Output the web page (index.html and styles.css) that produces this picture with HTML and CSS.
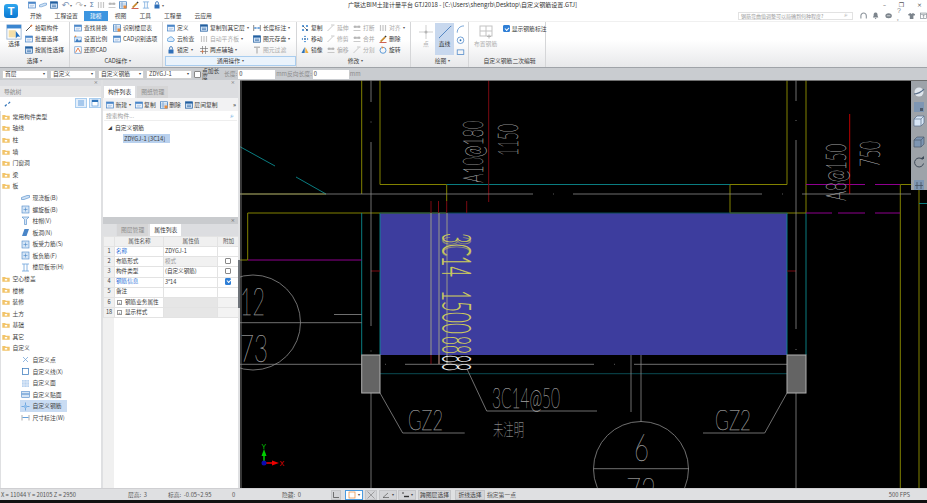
FILE: index.html
```html
<!DOCTYPE html>
<html lang="zh">
<head>
<meta charset="utf-8">
<title>广联达BIM土建计量平台 GTJ2018</title>
<link rel="stylesheet" href="styles.css">
</head>
<body>
<svg class="defs" xmlns="http://www.w3.org/2000/svg">
  <symbol id="i-pick" viewBox="0 0 8 8"><path d="M1 7 6 2" stroke="#555" stroke-width="1"/><path d="M5.500 2.500 7 1" stroke="#d8703a" stroke-width="1.400"/></symbol>
  <symbol id="i-panel" viewBox="0 0 8 8"><rect x=".5" y="1" width="7" height="6" fill="#e8f0fa" stroke="#4a86c8" stroke-width=".7"/><rect x=".5" y="1" width="7" height="1.800" fill="#4a86c8"/><path d="M2 4.500h4M2 5.800h3" stroke="#9ab8dc" stroke-width=".5"/></symbol>
  <symbol id="i-table" viewBox="0 0 8 8"><rect x=".5" y=".8" width="7" height="6.400" fill="#fff" stroke="#2f73b8" stroke-width=".7"/><path d="M.5 3h7M3 1v6M.5 5h7" stroke="#2f73b8" stroke-width=".5"/><rect x="4.500" y="4.500" width="3" height="3" fill="#e98b3c"/></symbol>
  <symbol id="i-scale" viewBox="0 0 8 8"><rect x=".5" y="2" width="7" height="5" fill="#dbe9f8" stroke="#4a86c8" stroke-width=".5"/><path d="M1 7 3 3.500 5 6 6.500 4.500 7.500 7z" fill="#3d7cc0"/><circle cx="1.500" cy="1.300" r=".9" fill="#e98b3c"/></symbol>
  <symbol id="i-restore" viewBox="0 0 8 8"><rect x=".8" y=".8" width="6.400" height="6.400" fill="#fff" stroke="#4a86c8" stroke-width=".6"/><path d="M1.500 6.500 4 2l2.500 4.500" fill="none" stroke="#e2703a" stroke-width=".9"/></symbol>
  <symbol id="i-cloud" viewBox="0 0 8 8"><path d="M2 6.500a1.700 1.700 0 0 1-.2-3.400A2.300 2.300 0 0 1 6 3.200 1.700 1.700 0 0 1 6 6.500z" fill="#dcebfa" stroke="#4a93d8" stroke-width=".7"/></symbol>
  <symbol id="i-lock" viewBox="0 0 8 8"><rect x="1.500" y="3.500" width="5" height="4" fill="#2f6fb8"/><path d="M2.600 3.500V2a1.400 1.400 0 0 1 2.800 0v1.500" fill="none" stroke="#2f6fb8" stroke-width=".8"/></symbol>
  <symbol id="i-axis" viewBox="0 0 8 8"><path d="M2.500 0v8M5.500 0v8M0 2.500h8M0 5.500h8" stroke="#666" stroke-width=".6"/><circle cx="2.500" cy="5.500" r="1" fill="#e2703a"/></symbol>
  <symbol id="i-dim" viewBox="0 0 8 8"><path d="M.7 1v6M7.300 1v6" stroke="#555" stroke-width=".7"/><path d="M1 4h6" stroke="#3b82cc" stroke-width=".8"/><path d="M2.600 3 1.200 4l1.400 1zM5.400 3 6.800 4 5.400 5z" fill="#3b82cc"/></symbol>
  <symbol id="i-save" viewBox="0 0 8 8"><rect x=".5" y=".8" width="7" height="6.400" fill="#cfe1f5" stroke="#225f9f" stroke-width=".7"/><rect x=".5" y=".8" width="7" height="1.800" fill="#225f9f"/><path d="M2 4.200h4M2 5.600h4" stroke="#225f9f" stroke-width=".6"/></symbol>
  <symbol id="i-gray-t" viewBox="0 0 8 8"><path d="M1 1.200h6M4 1.200V7.500" stroke="#b9b9b9" stroke-width="1.400"/></symbol>
  <symbol id="i-gray-bars" viewBox="0 0 8 8"><path d="M1.500 1v6M4 1v6M6.500 1v6" stroke="#c5c5c5" stroke-width="1.200"/></symbol>
  <symbol id="i-gray-line" viewBox="0 0 8 8"><path d="M.5 7 6 1.500M4 1h3.500" stroke="#bcbcbc" stroke-width=".8"/></symbol>
  <symbol id="i-gray-blocks" viewBox="0 0 8 8"><path d="M1 3.500h2.500V2H1zM4.500 3.500H7V2H4.500zM.5 6.500h7" fill="#b5b5b5" stroke="#b5b5b5" stroke-width=".7"/></symbol>
  <symbol id="i-copy" viewBox="0 0 8 8"><g fill="#3b86d0"><circle cx="2" cy="2" r="1.100"/><circle cx="6" cy="2" r="1.100"/><circle cx="2" cy="6" r="1.100"/></g><circle cx="6" cy="6" r="1.100" fill="#26609f"/><path d="M2 2l4 4" stroke="#333" stroke-width=".5"/></symbol>
  <symbol id="i-move" viewBox="0 0 8 8"><path d="M4 .5 5.200 2H2.800zM4 7.500 2.800 6h2.400zM.5 4 2 2.800v2.400zM7.500 4 6 5.200V2.800z" fill="#3b86d0"/><circle cx="4" cy="4" r=".9" fill="#26609f"/></symbol>
  <symbol id="i-mirror" viewBox="0 0 8 8"><path d="M3.700 1v6H.5z" fill="#2f73b8"/><path d="M4.300 1v6h3.200z" fill="#f0b040"/></symbol>
  <symbol id="i-delete" viewBox="0 0 8 8"><path d="M1 6 5.500 1.500l1.200 1.200L2.200 7.200z" fill="#c98a2c"/><path d="M.5 7.500h7" stroke="#c0392b" stroke-width=".8"/><path d="M5.500 1.500l1-1 1.100 1.100-1 1z" fill="#333"/></symbol>
  <symbol id="i-rotate" viewBox="0 0 8 8"><circle cx="4" cy="4.300" r="3" fill="none" stroke="#3b86d0" stroke-width=".8"/><path d="M2.500 .3 5 1.300 3 2.800z" fill="#e98b3c"/></symbol>
  <symbol id="folder" viewBox="0 0 8 8"><path d="M.3 2h2.800l.8.8h3.800v4H.3z" fill="#f2c469"/><rect x="2.800" y="4" width="2.400" height="1.600" fill="#fff"/></symbol>
  <symbol id="n-slab" viewBox="0 0 9 9"><path d="M.5 4.500 6 2.500h2.500v2L3 6.500H.5z" fill="#cfe2f5" stroke="#4a86c8" stroke-width=".6"/></symbol>
  <symbol id="n-square" viewBox="0 0 9 9"><rect x="1" y="1" width="7" height="7" fill="#d5e5f6" stroke="#4a86c8" stroke-width=".6"/><path d="M2.500 4.500h4M4.500 2.500v4" stroke="#4a86c8" stroke-width=".6"/></symbol>
  <symbol id="n-cap" viewBox="0 0 9 9"><path d="M1 1h7L5.500 3.500v5h-2v-5z" fill="#d5e5f6" stroke="#4a86c8" stroke-width=".6"/></symbol>
  <symbol id="n-hole" viewBox="0 0 9 9"><path d="M1 8 3.500 1H8L5.500 8z" fill="#4a86c8"/></symbol>
  <symbol id="n-bars" viewBox="0 0 9 9"><path d="M1 1h7M1 8h7M3 1v7M6 1v7" stroke="#6ea3da" stroke-width=".8"/></symbol>
  <symbol id="n-x" viewBox="0 0 9 9"><path d="M2 2l5 5M7 2 2 7" stroke="#7aa7d8" stroke-width=".8"/></symbol>
  <symbol id="n-rect" viewBox="0 0 9 9"><rect x="1.500" y="1.500" width="6" height="6" fill="none" stroke="#2f73b8" stroke-width=".7"/><path d="M1.500 1.500h.1M7.500 1.500h.1M1.500 7.500h.1M7.500 7.500h.1" stroke="#2f73b8" stroke-width="1.600"/></symbol>
  <symbol id="n-dots" viewBox="0 0 9 9"><rect x="1" y="1" width="7" height="7" fill="#b8d2ee"/><path d="M1 3h7M1 6h7M3 1v7M6 1v7" stroke="#e8f1fb" stroke-width=".7"/></symbol>
  <symbol id="n-band" viewBox="0 0 9 9"><rect x=".7" y="1.500" width="7.600" height="6" fill="#d5e5f6" stroke="#4a86c8" stroke-width=".6"/><path d="M.7 4h7.600" stroke="#4a86c8" stroke-width="1"/></symbol>
  <symbol id="n-rebar" viewBox="0 0 9 9"><path d="M4.500 .5v8M.5 4.500h8" stroke="#4a90d8" stroke-width=".7"/><circle cx="4.500" cy="4.500" r="1.700" fill="#8fbdea"/></symbol>
  <symbol id="n-dim" viewBox="0 0 9 9"><path d="M1 2v5.500M8 2v5.500" stroke="#777" stroke-width=".6"/><path d="M1.500 4.500h6" stroke="#3b86d0" stroke-width=".8"/></symbol>
</svg>

<div class="app">
  <header class="head">
    <div class="logo-wrap"><div class="logo">T</div></div>
    <div class="head-main">
      <div class="title-row">
        <div class="qat">
          <svg class="qi"><use href="#i-panel"/></svg>
          <svg class="qi"><use href="#n-slab"/></svg>
          <svg class="qi"><use href="#i-save"/></svg>
          <span class="qg">↶</span><span class="qa">▾</span>
          <span class="qg lt">↷</span><span class="qa">▾</span>
          <span class="qg sig">Σ</span>
          <svg class="qi"><use href="#i-gray-bars"/></svg>
          <svg class="qi"><use href="#i-gray-blocks"/></svg>
          <svg class="qi"><use href="#i-table"/></svg>
          <svg class="qi"><use href="#i-delete"/></svg>
          <svg class="qi"><use href="#n-bars"/></svg>
          <svg class="qi"><use href="#i-lock"/></svg>
          <span class="qa">▾</span>
        </div>
        <div class="title">广联达BIM土建计量平台 GTJ2018 - [C:\Users\shengrb\Desktop\自定义钢筋设置.GTJ]</div>
        <div class="winctl"><span>–</span><span>❐</span><span>×</span></div>
      </div>
      <div class="tab-row">
        <nav class="tabs">
          <span class="tab t1">开始</span><span class="tab t2">工程设置</span><span class="tab active">建模</span><span class="tab t3">视图</span><span class="tab t4">工具</span><span class="tab t5">工程量</span><span class="tab t6">云应用</span>
        </nav>
        <div class="search-top"><span>钢筋弯曲值调整可以局确到何种程度?</span><span class="mag">⌕</span></div>
        <div class="help-icons">
          <svg class="hi" viewBox="0 0 8 8"><path d="M1 7V4a3 3 0 0 1 6 0v3" fill="none" stroke="#8a929a" stroke-width="1.200"/></svg>
          <svg class="hi" viewBox="0 0 8 8"><path d="M4 .5c-2 0-2.200 2-2.200 3.500L1 6h6l-.8-2C6.200 2.500 6 .5 4 .5zM3 6.500h2L4 7.800z" fill="#7c848c"/></svg>
          <svg class="hi" viewBox="0 0 8 8"><ellipse cx="4" cy="4" rx="3.600" ry="2.800" fill="#7c848c"/><path d="M2 4h4" stroke="#fff" stroke-width=".7"/></svg>
          <span class="help-q">?<i>▾</i></span>
          <svg class="hi" viewBox="0 0 8 8"><path d="M2.500 1 0 2.500 1 4l1-.4V7.500h4V3.600L7 4l1-1.500L5.500 1 4 2z" fill="#7c848c"/></svg>
          <svg class="hi" viewBox="0 0 8 8"><rect x=".7" y="1" width="6.600" height="6" fill="none" stroke="#7c848c" stroke-width=".7"/><path d="M.7 2.500h6.600M4 6.500V3.500M2.800 4.500 4 3.300l1.200 1.200" fill="none" stroke="#7c848c" stroke-width=".7"/></svg>
        </div>
      </div>
    </div>
  </header>

  <section class="ribbon">
    <div class="grp g1">
      <div class="gbody">
        <div class="big">
          <svg class="big-ic" viewBox="0 0 18 18"><rect x="1" y="1" width="16" height="16" fill="#fff" stroke="#9bb6d6"/><rect x="1" y="1" width="16" height="4" fill="#3b86d0"/><rect x="3" y="7" width="8" height="8" fill="#f4dfa8"/><path d="M11 8v8l2.200-2 2.800.3z" fill="#1f6fc0"/></svg>
          <span>选择</span>
        </div>
        <div class="col">
          <div class="it"><svg class="ic"><use href="#i-pick"/></svg>拾取构件</div>
          <div class="it"><svg class="ic"><use href="#i-panel"/></svg>批量选择</div>
          <div class="it"><svg class="ic"><use href="#i-save"/></svg>按属性选择</div>
        </div>
      </div>
      <div class="glabel">选择 <b>▾</b></div>
    </div>

    <div class="grp g2">
      <div class="gbody">
        <div class="col w39">
          <div class="it"><svg class="ic"><use href="#i-panel"/></svg>查找替换</div>
          <div class="it"><svg class="ic"><use href="#i-scale"/></svg>设置比例</div>
          <div class="it"><svg class="ic"><use href="#i-restore"/></svg>还原CAD</div>
        </div>
        <div class="col">
          <div class="it"><svg class="ic"><use href="#i-table"/></svg>识别楼层表</div>
          <div class="it"><svg class="ic"><use href="#i-panel"/></svg>CAD识别选项</div>
        </div>
      </div>
      <div class="glabel">CAD操作 <b>▾</b></div>
    </div>

    <div class="grp g3">
      <div class="gbody">
        <div class="col w33">
          <div class="it"><svg class="ic"><use href="#i-panel"/></svg>定义</div>
          <div class="it"><svg class="ic"><use href="#i-cloud"/></svg>云检查</div>
          <div class="it"><svg class="ic"><use href="#i-lock"/></svg>锁定 <b>▾</b></div>
        </div>
        <div class="col w53">
          <div class="it"><svg class="ic"><use href="#i-save"/></svg>复制到其它层 <b>▾</b></div>
          <div class="it off"><svg class="ic"><use href="#i-gray-bars"/></svg>自动平齐板 <b>▾</b></div>
          <div class="it"><svg class="ic"><use href="#i-axis"/></svg>两点辅轴 <b>▾</b></div>
        </div>
        <div class="col">
          <div class="it"><svg class="ic"><use href="#i-dim"/></svg>长度标注 <b>▾</b></div>
          <div class="it"><svg class="ic"><use href="#i-save"/></svg>图元存盘 <b>▾</b></div>
          <div class="it off"><svg class="ic"><use href="#i-gray-t"/></svg>图元过滤</div>
        </div>
      </div>
      <div class="glabel hl">通用操作 <b>▾</b></div>
    </div>

    <div class="grp g4">
      <div class="gbody">
        <div class="col w26">
          <div class="it"><svg class="ic"><use href="#i-copy"/></svg>复制</div>
          <div class="it"><svg class="ic"><use href="#i-move"/></svg>移动</div>
          <div class="it"><svg class="ic"><use href="#i-mirror"/></svg>镜像</div>
        </div>
        <div class="col w26">
          <div class="it off"><svg class="ic"><use href="#i-gray-line"/></svg>延伸</div>
          <div class="it off"><svg class="ic"><use href="#i-gray-line"/></svg>修剪</div>
          <div class="it off"><svg class="ic"><use href="#i-gray-blocks"/></svg>偏移</div>
        </div>
        <div class="col w26">
          <div class="it off"><svg class="ic"><use href="#i-gray-blocks"/></svg>打断</div>
          <div class="it off"><svg class="ic"><use href="#i-gray-blocks"/></svg>合并</div>
          <div class="it off"><svg class="ic"><use href="#i-gray-line"/></svg>分割</div>
        </div>
        <div class="col">
          <div class="it off"><svg class="ic"><use href="#i-gray-bars"/></svg>对齐 <b>▾</b></div>
          <div class="it"><svg class="ic"><use href="#i-delete"/></svg>删除</div>
          <div class="it"><svg class="ic"><use href="#i-rotate"/></svg>旋转</div>
        </div>
      </div>
      <div class="glabel">修改 <b>▾</b></div>
    </div>

    <div class="grp g5">
      <div class="gbody">
        <div class="tool off">
          <svg class="tool-ic" viewBox="0 0 14 14"><path d="M7 0v14M0 7h14" stroke="#c9c9c9" stroke-width=".9"/><circle cx="7" cy="7" r="1.500" fill="#b5b5b5"/></svg>
          <span>点</span>
        </div>
        <div class="tool sel">
          <svg class="tool-ic" viewBox="0 0 14 14"><path d="M1 13 13 1" stroke="#4a7fbe" stroke-width=".9"/><path d="M1 13h.1M13 1h.1" stroke="#2f73b8" stroke-width="1.800"/></svg>
          <span>直线</span>
        </div>
        <div class="minis">
          <svg viewBox="0 0 9 9"><path d="M1 8C1 4 4 1 8 1" fill="none" stroke="#4a86c8" stroke-width=".8"/><path d="M1 8h.1M8 1h.1" stroke="#2f73b8" stroke-width="1.600"/></svg>
          <svg viewBox="0 0 9 9"><circle cx="4.500" cy="4.500" r="3.500" fill="none" stroke="#4a86c8" stroke-width=".8"/><circle cx="4.500" cy="4.500" r="1" fill="#2f73b8"/></svg>
          <svg viewBox="0 0 9 9"><rect x="1" y="2" width="7" height="5" fill="none" stroke="#4a86c8" stroke-width=".8"/></svg>
        </div>
      </div>
      <div class="glabel">绘图 <b>▾</b></div>
    </div>

    <div class="grp g6">
      <div class="gbody">
        <div class="tool off layout">
          <svg class="tool-ic" viewBox="0 0 14 14"><rect x="1" y="1" width="12" height="10" fill="none" stroke="#c3c3c3"/><path d="M7 1v10M1 6h12" stroke="#c3c3c3"/><path d="M10 9.500v4M8 11.500h4" stroke="#b5b5b5"/></svg>
          <span>布置钢筋</span>
        </div>
        <label class="chk"><span class="cb on"></span>显示钢筋标注</label>
      </div>
      <div class="glabel">自定义钢筋二次编辑</div>
    </div>
    <div class="rest"></div>
  </section>

  <section class="optbar">
    <div class="combo c1">首层<b>▾</b></div>
    <div class="combo">自定义<b>▾</b></div>
    <div class="combo">自定义钢筋<b>▾</b></div>
    <div class="combo">ZDYGJ-1<b>▾</b></div>
    <span class="cb plain"></span>
    <span class="opt-l">点加长度</span><span class="opt-m">长度:</span>
    <div class="num n1">0</div><span class="opt-m">mm反向长度:</span>
    <div class="num n2">0</div><span class="opt-m">mm</span>
  </section>

  <main class="work">
    <aside class="nav">
      <div class="strip"><span>×</span></div>
      <div class="nav-head">导航树</div>
      <div class="nav-tools">
        <svg class="ntop" viewBox="0 0 8 8"><path d="M1 6l2-2M5 3l2-2" stroke="#2f73b8" stroke-width="1.400"/></svg>
        <span class="ntb"><svg viewBox="0 0 8 8"><path d="M1 2h6M1 4h6M1 6h6" stroke="#4a90d8" stroke-width=".8"/></svg></span>
        <span class="ntb"><svg viewBox="0 0 8 8"><rect x="1" y="1" width="6" height="6" fill="#fff" stroke="#4a90d8" stroke-width=".6"/><rect x="1" y="1" width="6" height="2" fill="#2f73b8"/></svg></span>
      </div>
      <ul class="tree">
        <li class="top"><svg><use href="#folder"/></svg>常用构件类型</li>
        <li class="top"><svg><use href="#folder"/></svg>轴线</li>
        <li class="top"><svg><use href="#folder"/></svg>柱</li>
        <li class="top"><svg><use href="#folder"/></svg>墙</li>
        <li class="top"><svg><use href="#folder"/></svg>门窗洞</li>
        <li class="top"><svg><use href="#folder"/></svg>梁</li>
        <li class="top"><svg><use href="#folder"/></svg>板</li>
        <li class="sub"><svg><use href="#n-slab"/></svg>现浇板(B)</li>
        <li class="sub"><svg><use href="#n-square"/></svg>螺旋板(B)</li>
        <li class="sub"><svg><use href="#n-cap"/></svg>柱帽(V)</li>
        <li class="sub"><svg><use href="#n-hole"/></svg>板洞(N)</li>
        <li class="sub"><svg><use href="#n-square"/></svg>板受力筋(S)</li>
        <li class="sub"><svg><use href="#n-square"/></svg>板负筋(F)</li>
        <li class="sub"><svg><use href="#n-bars"/></svg>楼层板带(H)</li>
        <li class="top"><svg><use href="#folder"/></svg>空心楼盖</li>
        <li class="top"><svg><use href="#folder"/></svg>楼梯</li>
        <li class="top"><svg><use href="#folder"/></svg>装修</li>
        <li class="top"><svg><use href="#folder"/></svg>土方</li>
        <li class="top"><svg><use href="#folder"/></svg>基础</li>
        <li class="top"><svg><use href="#folder"/></svg>其它</li>
        <li class="top"><svg><use href="#folder"/></svg>自定义</li>
        <li class="sub"><svg><use href="#n-x"/></svg>自定义点</li>
        <li class="sub"><svg><use href="#n-rect"/></svg>自定义线(X)</li>
        <li class="sub"><svg><use href="#n-dots"/></svg>自定义面</li>
        <li class="sub"><svg><use href="#n-band"/></svg>自定义贴面</li>
        <li class="sub picked"><svg><use href="#n-rebar"/></svg><span>自定义钢筋</span></li>
        <li class="sub"><svg><use href="#n-dim"/></svg>尺寸标注(W)</li>
      </ul>
    </aside>

    <div class="mid">
      <div class="strip"><span>×</span></div>
      <div class="ptabs">
        <span class="ptab on">构件列表</span><span class="ptab">图纸管理</span>
      </div>
      <div class="list-pane">
        <div class="list-tools">
          <span class="lt-i"><svg class="ic"><use href="#i-panel"/></svg>新建 <b>▾</b></span>
          <span class="lt-i"><svg class="ic"><use href="#i-panel"/></svg>复制</span>
          <span class="lt-i"><svg class="ic"><use href="#i-table"/></svg>删除</span>
          <span class="lt-i"><svg class="ic"><use href="#i-save"/></svg>层间复制</span>
          <span class="more">»</span>
        </div>
        <div class="list-search"><span>搜索构件...</span><i>⌕</i></div>
        <div class="ltree">
          <div class="lroot"><b>◢</b>自定义钢筋</div>
          <div class="lleaf"><span>ZDYGJ-1 [3C14]</span></div>
        </div>
      </div>
      <div class="split"><span>×</span></div>
      <div class="ptabs t2">
        <span class="ptab">图层管理</span><span class="ptab on">属性列表</span>
      </div>
      <div class="prop-pane">
        <table class="props">
          <colgroup><col class="cn"><col class="ca"><col class="cv"><col class="cx"></colgroup>
          <thead><tr><th></th><th>属性名称</th><th>属性值</th><th>附加</th></tr></thead>
          <tbody>
            <tr><td class="n">1</td><td class="link">名称</td><td>ZDYGJ-1</td><td></td></tr>
            <tr><td class="n">2</td><td>布筋形式</td><td class="mute">模式</td><td class="x"><span class="cb"></span></td></tr>
            <tr><td class="n">3</td><td>构件类型</td><td>(自定义钢筋)</td><td class="x"><span class="cb"></span></td></tr>
            <tr><td class="n">4</td><td class="link">钢筋信息</td><td>3<sup>⌀</sup>14</td><td class="x"><span class="cb on"></span></td></tr>
            <tr><td class="n">5</td><td>备注</td><td></td><td></td></tr>
            <tr><td class="n">6</td><td><span class="plus">+</span>钢筋业务属性</td><td class="fill"></td><td class="fill2"></td></tr>
            <tr><td class="n">18</td><td><span class="plus">+</span>显示样式</td><td class="fill"></td><td class="fill2"></td></tr>
          </tbody>
        </table>
        <div class="prop-rest"><div class="prop-num"></div></div>
      </div>
    </div>

    <div class="scrollgap"><div class="thumb"></div></div>

    <div class="canvas">
      <svg class="cad" viewBox="240 80 687 408" xmlns="http://www.w3.org/2000/svg">
        <rect x="240" y="80" width="687" height="408" fill="#000"/>
        <rect class="slab" x="380" y="213" width="407" height="142"/>

        <g class="y">
          <path d="M361.700 80V194M240 194H326M380 80V184.500H446.700V201"/>
          <path d="M247.700 260V213H446.700M240 260H247.700"/>
          <path d="M787 80V184.500H730V213H806V80"/>
          <path d="M900.300 184.500V488M919 190V488M900.300 184.500H912"/>
        </g>
        <g class="c">
          <path d="M240 146.700 275 166M296 177 326 194M446.700 184.500H730M919 203.500H927"/>
          <path d="M361.700 213V355M380 213V355M787 213V355M806 213V355"/>
        </g>
        <path class="dc" d="M380 373.700H787M380 213H787"/>
        <g class="m">
          <path d="M248 260H361.700"/>
          <path d="M806 184.500H865M875 184.500H900M806 213H832M838 213H865M875 213H900"/>
        </g>
        <g class="r">
          <path d="M488.700 80V202M431 201V213M438.500 201V213M446.700 201V213M466.700 201V213M371 271H380"/>
          <path d="M431 355V364M439 355V364M787 271H796"/>
        </g>
        <path class="r2" d="M849.700 114V194"/>
        <g class="g">
          <path d="M241 80V488M240 80.500H927"/>
          <path d="M371 80V102M371 121.500V122.500M371 142V326M371 350.500V351.500M371 393V488"/>
          <path d="M796 80V101M796 120V121M796 140V329M796 349V350M796 393V488"/>
          <path d="M240 194H533M553 194H553.800M573 194H762M782 194H782.800M802 194H911"/>
          <path d="M240 364.300H361.700M385 364.300H385.800M405 364.300H594M614 364.300H614.800M634 364.300H787"/>
          <path d="M240 322.700H361.700M334 314.500H361.700"/>
          <path d="M631 355V412M641 355V421.700"/>
          <path d="M380 393 402.700 433H464.700M787 393 764.700 433H703"/>
          <path d="M467 369 486.700 411H597"/>
          <path d="M593.700 468.700H689"/>
          <circle cx="253" cy="322.500" r="47.500"/>
          <circle cx="641" cy="469" r="47.500"/>
        </g>
        <path class="bars" d="M431 213V355M439 213V364M447 213V364"/>

        <rect class="col-box" x="361.700" y="355" width="18.300" height="38"/>
        <rect class="col-box" x="787" y="355" width="19" height="38"/>

        <text class="t" font-size="28" transform="translate(482.700 182.700) rotate(-90)" textLength="62" lengthAdjust="spacingAndGlyphs">A10@180</text>
        <text class="t" font-size="28" transform="translate(518 156) rotate(-90)" textLength="32" lengthAdjust="spacingAndGlyphs">1150</text>
        <text class="t" font-size="28" transform="translate(846 200.700) rotate(-90)" textLength="57" lengthAdjust="spacingAndGlyphs">A8@150</text>
        <text class="t" font-size="28" transform="translate(880 167) rotate(-90)" textLength="26" lengthAdjust="spacingAndGlyphs">750</text>

        <text class="yt" font-size="42" transform="translate(442 233) rotate(90)" textLength="44" lengthAdjust="spacingAndGlyphs">3C14</text>
        <text class="yt ghost" font-size="42" transform="translate(442 236) rotate(90)" textLength="40" lengthAdjust="spacingAndGlyphs">3C14</text>
        <text class="yt" font-size="42" transform="translate(442 290) rotate(90)" textLength="44" lengthAdjust="spacingAndGlyphs">1500</text>
        <text class="yt" font-size="42" transform="translate(442 336) rotate(90)" textLength="18" lengthAdjust="spacingAndGlyphs">88</text>
        <text class="wt" font-size="42" transform="translate(442 355) rotate(90)" textLength="16" lengthAdjust="spacingAndGlyphs">88</text>

        <text class="t" font-size="27" x="408" y="430" textLength="35" lengthAdjust="spacingAndGlyphs">GZ2</text>
        <text class="t" font-size="27" x="715" y="430" textLength="36" lengthAdjust="spacingAndGlyphs">GZ2</text>
        <text class="t" font-size="27" x="492" y="408" textLength="68" lengthAdjust="spacingAndGlyphs">3C14@50</text>
        <text class="tc" font-size="17" x="493" y="436" textLength="31" lengthAdjust="spacingAndGlyphs">未注明</text>
        <text class="t" font-size="38" x="240" y="315" textLength="25" lengthAdjust="spacingAndGlyphs">12</text>
        <text class="t" font-size="38" x="240" y="362" textLength="28" lengthAdjust="spacingAndGlyphs">73</text>
        <text class="t" font-size="38" x="634" y="461" textLength="15" lengthAdjust="spacingAndGlyphs">6</text>
        <text class="t" font-size="38" x="626" y="505" textLength="30" lengthAdjust="spacingAndGlyphs">72</text>

        <path class="ax-y" d="M264 463V452"/><path class="ax-yh" d="M264 449 261.500 456H266.500z"/>
        <path class="ax-x" d="M264 463H275"/><path class="ax-xh" d="M279 463 272 460.500V465.500z"/>
        <circle class="ax-o" cx="264" cy="463" r="2.500"/>
        <text class="ax-yt" x="261.500" y="449" font-size="7">Y</text>
        <text class="ax-xt" x="279.500" y="466" font-size="7">X</text>
      </svg>
      <div class="sidebar">
        <svg viewBox="0 0 12 12"><circle cx="6" cy="6" r="4.500" fill="#dfe5ec"/><path d="M1 8c3 0 8-2 10-5" stroke="#5a6f8a" stroke-width="1.200" fill="none"/></svg>
        <svg viewBox="0 0 12 12"><rect x="1" y="1" width="10" height="10" fill="#7e96b3"/><rect x="7" y="7" width="3" height="3" fill="#4c5a6c"/></svg>
        <svg viewBox="0 0 12 12"><path d="M1 4 4 1h7v7l-3 3H1z" fill="#d8e6f6" stroke="#5a6f8a" stroke-width=".7"/><path d="M1 4h7v7M8 4l3-3" fill="none" stroke="#5a6f8a" stroke-width=".7"/></svg>
        <svg class="gap" viewBox="0 0 12 12"><path d="M1 4 4 1h7v7l-3 3H1z" fill="#7e96b3" stroke="#4c5a6c" stroke-width=".7"/><path d="M1 4h7v7M8 4l3-3" fill="none" stroke="#4c5a6c" stroke-width=".7"/></svg>
        <svg class="gap" viewBox="0 0 12 12"><path d="M9.500 3.500a4.500 4.500 0 1 0 1 4" fill="none" stroke="#3f4a58" stroke-width="1"/><path d="M7 3h4V0z" fill="#3f4a58"/></svg>
        <svg class="gap2" viewBox="0 0 12 12"><rect x="1" y="1" width="10" height="10" fill="#7e96b3"/><path d="M4 3v7M8 3v7M2 6.500h8" stroke="#3f4a58" stroke-width=".7"/></svg>
      </div>
    </div>
  </main>

  <footer class="status">
    <span class="s-xyz">X = 11044 Y = 20105 Z = 2950</span>
    <span class="s-h">层高:&nbsp; 3</span>
    <span class="s-b">标高:&nbsp; -0.05~2.95</span>
    <span class="s-z">0</span>
    <span class="s-hide">隐藏:&nbsp; 0</span>
    <span class="sb b1"><svg viewBox="0 0 8 8"><path d="M1.500 1v5.500H7" fill="none" stroke="#444" stroke-width=".7"/></svg></span>
    <span class="sb b2"><svg viewBox="0 0 8 8"><rect x="1" y="1" width="6" height="6" fill="#fff" stroke="#e98b3c" stroke-width=".7"/></svg><b>▾</b></span>
    <span class="sb b3"><svg viewBox="0 0 8 8"><path d="M.5 .5l7 7M7.500 .5l-7 7" stroke="#666" stroke-width=".5"/></svg></span>
    <span class="sb b4"><svg viewBox="0 0 8 8"><path d="M1 6.500h6M1 6.500 6 2" stroke="#444" stroke-width=".6"/></svg><b>▾</b></span>
    <span class="sb b4"><svg viewBox="0 0 8 8"><path d="M1 2h2M2 1v2" stroke="#444" stroke-width=".6"/><path d="M3 5.500h5" stroke="#333" stroke-width="1.400"/></svg><b>▾</b></span>
    <span class="sb b5">跨图层选择</span>
    <span class="sb b6">折线选择</span>
    <span class="s-hint">指定第一点</span>
    <span class="s-fps">500 FPS</span>
  </footer>
  <div class="blackline"></div>
</div>
</body>
</html>
```

FILE: styles.css
```css
* { box-sizing: border-box; }
html, body { margin: 0; padding: 0; width: 927px; height: 503px; overflow: hidden; background: #dfe0e2; }
body { font-family: "Noto Sans CJK SC", "Liberation Sans", sans-serif; font-size: 5.8px; color: #3c3c3c; line-height: 1; }
.defs { display: none; }
.app { width: 927px; height: 503px; display: flex; flex-direction: column; }

/* header */
.head { height: 21px; display: flex; background: #fff; flex: none; }
.logo-wrap { width: 28px; display: flex; padding: 4px 0 0 4px; }
.logo { width: 14px; height: 14px; border-radius: 3px; background: linear-gradient(#2fa6ee, #0a78d2); color: #fff; font: bold 11px/14px "Liberation Sans", sans-serif; text-align: center; }
.head-main { flex: 1; display: flex; flex-direction: column; min-width: 0; }
.title-row { height: 10.5px; display: flex; align-items: center; }
.qat { width: 148px; display: flex; align-items: center; gap: 3.2px; height: 10.5px; padding-left: 0; flex: none; }
.qi { width: 8px; height: 8px; flex: none; }
.qg { font: 9px/8px "DejaVu Sans", sans-serif; color: #7c93b4; }
.qg.lt { color: #bbb; }
.qg.sig { color: #5a7ba6; font-size: 7px; }
.qa { font-size: 4px; color: #666; margin-left: -2px; }
.title { margin-left: 172px; width: 240px; white-space: nowrap; font-size: 6.05px; color: #333; flex: none; }
.winctl { margin-left: auto; display: flex; width: 44px; justify-content: space-between; padding-right: 5px; color: #555; font: 6px/10px "DejaVu Sans", sans-serif; }
.tab-row { height: 10.5px; display: flex; align-items: stretch; }
.tabs { display: flex; width: 710px; flex: none; }
.tab { display: flex; align-items: center; height: 10.5px; font-size: 5.8px; color: #444; }
.t1 { margin-left: 2px; }
.t2 { margin-left: 13px; }
.tab.active { margin-left: 6px; width: 24px; justify-content: center; background: #3c95e0; color: #fff; }
.t3 { margin-left: 7px; }
.t4 { margin-left: 13px; }
.t5 { margin-left: 13px; }
.t6 { margin-left: 13px; }
.search-top { width: 118px; height: 8.5px; margin-top: 1px; border: 1px solid #e2e2e2; display: flex; align-items: center; justify-content: space-between; padding: 0 4px 0 2px; color: #9a9a9a; font-size: 5px; }
.mag { font: 7px/7px "DejaVu Sans", sans-serif; color: #999; }
.help-icons { display: flex; align-items: center; gap: 5px; padding-left: 7px; }
.hi { width: 7.500px; height: 7.500px; }
.help-q { font: 7px/8px "Liberation Sans", sans-serif; color: #7c848c; }
.help-q i { font-size: 3px; font-style: normal; }

/* ribbon */
.ribbon { height: 46px; flex: none; display: flex; background: linear-gradient(#fff 0, #fff 40%, #e7e8ea 100%); border-top: 1px solid #f0f0f0; }
.grp { display: flex; flex-direction: column; border-right: 1px solid #d5d6d8; height: 100%; flex: none; }
.g1 { width: 70px; }
.g2 { width: 93px; padding-left: 4px; }
.g3 { width: 134px; padding-left: 4px; }
.g4 { width: 114px; padding-left: 4px; }
.g5 { width: 58px; padding-left: 6px; }
.g6 { width: 77px; padding-left: 5px; }
.rest { flex: 1; }
.gbody { flex: 1; display: flex; min-height: 0; }
.glabel { height: 10px; margin-bottom: 1px; display: flex; align-items: center; justify-content: center; gap: 2px; font-size: 5.8px; flex: none; }
.glabel b, .it b { font-size: 3.500px; font-weight: normal; color: #555; }
.glabel.hl { background: #eaf3fc; border: 1px solid #a9cdef; margin-left: -2px; margin-right: 0; }
.big { width: 25px; display: flex; flex-direction: column; align-items: center; padding: 2px 0 0 3px; gap: 1px; flex: none; }
.big-ic { width: 16px; height: 16px; }
.col { display: flex; flex-direction: column; }
.w39 { width: 39px; }
.w33 { width: 33px; }
.w53 { width: 53px; }
.w26 { width: 26px; }
.it { height: 11.300px; display: flex; align-items: center; gap: 2px; white-space: nowrap; }
.it.off { color: #a8a8a8; }
.ic { width: 8px; height: 8px; flex: none; }
.tool { width: 19px; height: 32px; display: flex; flex-direction: column; align-items: center; padding-top: 2px; gap: 2px; margin-top: 1px; }
.tool.off { color: #b0b0b0; width: 18px; }
.tool.sel { background: #c8d8ee; color: #333; }
.tool-ic { width: 14px; height: 14px; flex: none; }
.minis { display: flex; flex-direction: column; gap: 2.800px; padding: 3px 0 0 2px; }
.minis svg { width: 9px; height: 9px; }
.tool.layout { width: 24px; white-space: nowrap; }
.chk { display: flex; align-items: center; gap: 2px; height: 11px; margin: 1px 0 0 6px; white-space: nowrap; }
.cb { display: inline-block; width: 6.500px; height: 6.500px; border: 1px solid #888; background: #fff; border-radius: 1px; position: relative; flex: none; }
.cb.on { background: #2f7fd6; border-color: #2f7fd6; }
.cb.on::after { content: ""; position: absolute; left: 1px; top: .4px; width: 3px; height: 2px; border-left: 1px solid #fff; border-bottom: 1px solid #fff; transform: rotate(-45deg); }

/* option bar */
.optbar { height: 13px; flex: none; display: flex; align-items: center; background: #c9ccd0; padding-left: 2px; border-top: 1px solid #9fa3a8; }
.combo { width: 45.500px; height: 9px; margin-right: 2.500px; background: #fff; border: 1px solid #d0d0d0; display: flex; align-items: center; justify-content: space-between; padding: 0 2px; }
.combo b { font-size: 3.500px; font-weight: normal; }
.optbar .plain { margin-left: 0; width: 7px; height: 7px; }
.opt-l { margin-left: 1px; width: 22px; }
.opt-m { color: #8b8b8b; white-space: nowrap; }
.num { height: 9px; background: #fff; padding: 1.500px 0 0 1px; margin: 0 1px; }
.n1 { width: 37px; }
.n2 { width: 36px; }

/* work */
.work { flex: 1; min-height: 0; display: flex; background: #dfe0e2; }
.strip { height: 6px; display: flex; justify-content: flex-end; padding-right: 3px; color: #777; font: 5px/5px "DejaVu Sans", sans-serif; background: #dcdde0; flex: none; }
.nav { width: 101px; flex: none; display: flex; flex-direction: column; background: #fff; }
.nav-head { height: 11px; background: #e6e6e7; color: #888; display: flex; align-items: center; padding-left: 4px; flex: none; }
.nav-tools { height: 14px; display: flex; gap: 2px; padding: 1px 0 0 4px; flex: none; }
.ntop { width: 7px; height: 7px; margin: 3px auto 0 0; }
.ntb { width: 12px; height: 10px; background: #e4effb; border: 1px solid #a9cdef; display: flex; align-items: center; justify-content: center; }
.ntb svg { width: 8px; height: 8px; }
.tree { list-style: none; margin: 0; padding: 0; border-left: 1px solid #dfe0e2; flex: 1; }
.tree li { height: 11.580px; display: flex; align-items: center; white-space: nowrap; color: #444; }
.tree .top { padding-left: 1px; gap: 2.500px; }
.tree .top svg { width: 8px; height: 8px; }
.tree .sub { padding-left: 20px; gap: 2.500px; }
.tree .sub svg { width: 9px; height: 9px; }
.tree .picked { background: linear-gradient(90deg, transparent 19px, #c9dcf3 19px, #c9dcf3 66px, transparent 66px); }

.mid { width: 135px; margin-left: 2px; flex: none; display: flex; flex-direction: column; }
.ptabs { height: 12px; display: flex; padding-left: 1px; gap: 2px; background: #dcdde0; flex: none; align-items: flex-end; }
.ptab { height: 12px; padding: 0 4px; display: flex; align-items: center; background: #d5d5d6; color: #8c8c8c; }
.ptab.on { background: #fff; color: #333; }
.list-pane { height: 119px; background: #fff; flex: none; display: flex; flex-direction: column; }
.list-tools { height: 13px; display: flex; align-items: center; gap: 4px; padding-left: 3px; background: #f2f2f3; }
.lt-i { display: flex; align-items: center; gap: 1.500px; white-space: nowrap; }
.lt-i b { font-size: 3.500px; font-weight: normal; }
.more { margin-left: auto; padding-right: 2px; font-weight: bold; }
.list-search { height: 9px; margin: 1px 1px 0; display: flex; justify-content: space-between; align-items: center; padding: 0 3px 0 2px; color: #999; border-bottom: 1px solid #eee; }
.list-search i { font: normal 7px/7px "DejaVu Sans", sans-serif; color: #3d94d8; }
.ltree { padding: 1.500px 0 0 5px; }
.lroot { height: 11px; display: flex; align-items: center; gap: 3px; }
.lroot b { font-size: 4px; font-weight: normal; }
.lleaf { height: 10px; padding-left: 15px; display: flex; align-items: center; }
.lleaf span { background: #b9d1ee; width: 47px; height: 9px; display: flex; align-items: center; padding-left: 1px; white-space: nowrap; }
.split { height: 7px; background: #c9cbce; display: flex; justify-content: flex-end; padding-right: 3px; color: #666; font: 5px/7px "DejaVu Sans", sans-serif; flex: none; }
.prop-pane { flex: 1; min-height: 0; display: flex; flex-direction: column; background: #fff; }
.props { border-collapse: collapse; table-layout: fixed; width: 135px; flex: none; }
.cn { width: 11px; }
.ca { width: 49px; }
.cv { width: 54px; }
.cx { width: 21px; }
.props th, .props td { height: 10.150px; padding: 0 0 0 1px; border: 1px solid #e3e3e3; font-weight: normal; white-space: nowrap; overflow: hidden; font-size: 5.6px; }
.props th { background: #f0f0f0; text-align: center; color: #555; }
.props td.n { background: #f0f0f0; text-align: center; padding: 0; }
.props .link { color: #2a70d8; }
.props .mute { background: #f1f1f1; color: #999; }
.props .fill { background: #e6e6e6; }
.props .fill2 { background: #f3f3f3; }
.props .x { text-align: center; padding: 0; }
.props sup { font-size: 3.500px; }
.plus { display: inline-block; width: 5px; height: 5px; border: 1px solid #999; margin: 0 3px 0 1px; font: 4px/3.500px "Liberation Sans", sans-serif; text-align: center; vertical-align: -0.5px; }
.prop-rest { flex: 1; display: flex; }
.prop-num { width: 11px; background: #f0f0f0; }

.scrollgap { width: 2px; flex: none; padding-top: 180px; }
.thumb { height: 48px; background: #6e7379; }

.canvas { flex: 1; min-width: 0; position: relative; background: #000; }
.cad { display: block; width: 100%; height: 100%; }
.slab { fill: #3d3d9e; }
.y path, .c path, .dc, .m path, .r path, .r2, .g path, .g circle, .bars { fill: none; }
.y path { stroke: #828200; stroke-width: 1; }
.c path { stroke: #0b8a8f; stroke-width: .9; }
.dc { stroke: #0a4a52; stroke-width: 1; }
.m path { stroke: #8f008f; stroke-width: 1; }
.r path { stroke: #7a0a12; stroke-width: 1; }
.r2 { stroke: #b00; stroke-width: 1; }
.g path, .g circle { stroke: #8c8c8c; stroke-width: .8; }
.bars { stroke: #9a9a88; stroke-width: 1; }
.col-box { fill: #646464; stroke: #b0b0b0; stroke-width: 1; }
.t { font-family: "Lato", "Inter", sans-serif; font-weight: 100; fill: #b4b4b4; stroke: #a0a0a0; stroke-width: .25; }
.tc { font-family: "Noto Sans CJK SC", sans-serif; font-weight: 100; fill: #b0b0b0; }
.yt { font-family: "Lato", "Inter", sans-serif; font-weight: 300; fill: #c9c85e; }
.yt.ghost { opacity: .55; }
.wt { font-family: "Lato", "Inter", sans-serif; font-weight: 300; fill: #f0f0f0; }
.ax-y { stroke: #0c0; stroke-width: 1.500; }
.ax-yh { fill: #0c0; }
.ax-x { stroke: #e00; stroke-width: 1.500; }
.ax-xh { fill: #e00; }
.ax-o { fill: #0a0ab0; }
.ax-yt { fill: #0c0; font-family: "Liberation Sans", sans-serif; }
.ax-xt { fill: #e00; font-family: "Liberation Sans", sans-serif; }
.sidebar { position: absolute; right: 0; top: 1px; width: 16px; height: 109px; background: #9ea3a9; display: flex; flex-direction: column; align-items: center; padding-top: 5px; gap: 2.500px; }
.sidebar svg { width: 12px; height: 12px; flex: none; }
.sidebar .gap { margin-top: 6px; }
.sidebar .gap2 { margin-top: 8px; }

/* status */
.status { height: 12px; flex: none; display: flex; align-items: center; background: #dfe0e2; color: #555; white-space: nowrap; border-top: 1px solid #cfcfd2; }
.s-xyz { margin-left: 1px; width: 127px; }
.s-h { width: 40px; }
.s-b { width: 64px; }
.s-z { width: 50px; }
.s-hide { width: 49px; }
.sb { height: 10px; border: 1px solid #c4c5c8; background: #d3d4d7; display: flex; align-items: center; justify-content: center; margin-right: 2px; color: #444; }
.sb svg { width: 8px; height: 8px; }
.sb b { font-size: 3.500px; font-weight: normal; margin-left: 2px; }
.b1 { width: 10px; margin-right: 4px; }
.b2 { width: 18px; background: #fff; border-color: #4a9be0; }
.b3 { width: 12px; }
.b4 { width: 18px; margin-right: 1px; }
.b5 { width: 33px; margin-left: 1px; margin-right: 4px; }
.b6 { width: 30px; }
.s-hint { margin-left: 0; }
.s-fps { margin-left: auto; margin-right: 17px; }
.blackline { height: 3px; background: #111; flex: none; }
```
